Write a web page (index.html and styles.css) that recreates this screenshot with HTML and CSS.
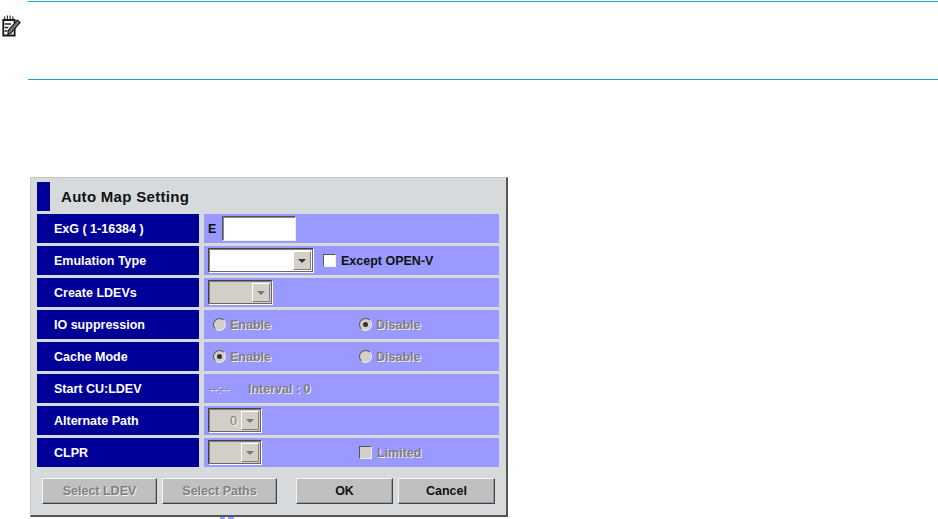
FILE: index.html
```html
<!DOCTYPE html>
<html lang="en">
<head>
<meta charset="utf-8">
<title>Auto Map Setting</title>
<link rel="stylesheet" href="styles.css">
</head>
<body>
<section class="note">
  <svg class="note-icon" width="20" height="22" viewBox="0 0 22 22" preserveAspectRatio="none" aria-hidden="true">
    <path d="M2.500 5H15V20.500H2.500Z" fill="#fff" stroke="#1a1a1a" stroke-width="2"/>
    <path d="M4 1.500V5M7 .5V5M10 .5V5M13 1.500V5" stroke="#222" stroke-width="1.200" fill="none"/>
    <path d="M4 9H11M4 12.500H8M4 16H7" stroke="#222" stroke-width="1.500" fill="none"/>
    <path d="M8 15.500L18 5L21 7.500L11 18L7.500 19.500Z" fill="#777" stroke="#1a1a1a" stroke-width="1.200"/>
  </svg>
</section>
<main class="panel">
  <header class="panel-title"><span class="title-mark"></span><h1>Auto Map Setting</h1></header>
  <div class="rows">
    <div class="label">ExG ( 1-16384 )</div>
    <div class="value"><span class="dark prefix">E</span><span class="field"></span></div>

    <div class="label">Emulation Type</div>
    <div class="value">
      <span class="select select-white select-wide"><span class="arrow"><i></i></span></span>
      <span class="check except"></span><span class="dark">Except OPEN-V</span>
    </div>

    <div class="label">Create LDEVs</div>
    <div class="value"><span class="select select-mid"><span class="arrow"><i></i></span></span></div>

    <div class="label">IO suppression</div>
    <div class="value radios">
      <span class="option"><span class="radio"></span><span class="off">Enable</span></span>
      <span class="option"><span class="radio on"></span><span class="off">Disable</span></span>
    </div>

    <div class="label">Cache Mode</div>
    <div class="value radios">
      <span class="option"><span class="radio on"></span><span class="off">Enable</span></span>
      <span class="option"><span class="radio"></span><span class="off">Disable</span></span>
    </div>

    <div class="label">Start CU:LDEV</div>
    <div class="value"><span class="off cu">--:--</span><span class="off">Interval : 0</span></div>

    <div class="label">Alternate Path</div>
    <div class="value"><span class="select select-small"><span class="sel-text off">0</span><span class="arrow"><i></i></span></span></div>

    <div class="label">CLPR</div>
    <div class="value">
      <span class="select select-small"><span class="arrow"><i></i></span></span>
      <span class="check limited"></span><span class="off">Limited</span>
    </div>
  </div>
  <footer class="buttons">
    <span class="btn btn-off">Select LDEV</span>
    <span class="btn btn-off">Select Paths</span>
    <span class="btn btn-ok">OK</span>
    <span class="btn">Cancel</span>
  </footer>
  <span class="scrap"></span>
</main>
</body>
</html>
```
FILE: styles.css
```css
html, body { margin: 0; padding: 0; background: #fff; }
body { width: 938px; height: 519px; overflow: hidden; font-family: "Liberation Sans", Arial, sans-serif; }

.note {
  box-sizing: border-box;
  height: 79px;
  margin: 1px 0 0 28px;
  border-top: 1px solid #1f9fd0;
  border-bottom: 1px solid #1f9fd0;
  position: relative;
}
.note-icon { position: absolute; left: -27px; top: 13px; }

.panel {
  box-sizing: border-box;
  position: relative;
  width: 478px;
  height: 340px;
  margin: 97px 0 0 30px;
  padding: 4px 7px 0 6px;
  background: #d6dadd;
  border-top: 1px solid #c4c6c4;
  border-left: 1px solid #c8c8c4;
  border-right: 2px solid #555;
  border-bottom: 2px solid #555;
}
.panel-title { display: flex; height: 29px; align-items: center; margin-bottom: 3px; }
.title-mark { width: 13px; height: 29px; background: #000099; margin-right: 11px; }
.panel-title h1 { margin: 0; font-size: 15px; font-weight: 700; color: #111; letter-spacing: .3px; }

.rows { display: grid; grid-template-columns: 162px 295px; column-gap: 5px; row-gap: 3px; grid-auto-rows: 29px; }
.label {
  background: #000099;
  color: #fff;
  font-size: 12.500px;
  font-weight: 700;
  line-height: 30px;
  padding-left: 17px;
}
.value {
  background: #9999ff;
  display: flex;
  align-items: center;
  padding-left: 4px;
  font-size: 12.500px;
  font-weight: 700;
}
.dark { color: #111; }
.off { color: #808080; text-shadow: 1px 1px 0 #eee; }
.prefix { width: 14px; }
.field {
  box-sizing: border-box;
  width: 74px;
  height: 25px;
  background: #fff;
  border: 1px solid;
  border-color: #555 #eee #eee #555;
  box-shadow: inset 1px 1px 0 #888;
}
.select {
  box-sizing: border-box;
  height: 25px;
  display: flex;
  justify-content: flex-end;
  align-items: center;
  background: #d4d0c8;
  border: 1px solid;
  border-color: #444 #fff #fff #444;
  box-shadow: inset 1px 1px 0 #808080, inset -1px -1px 0 #666;
  padding: 2px;
}
.select-white { background: #fff; }
.select-wide { width: 106px; }
.select-mid { width: 65px; }
.select-small { width: 54px; }
.sel-text { margin-right: 4px; font-weight: 400; }
.arrow {
  box-sizing: border-box;
  width: 18px;
  height: 19px;
  background: #d4d0c8;
  border: 1px solid;
  border-color: #fff #808080 #808080 #fff;
  display: flex;
  align-items: center;
  justify-content: center;
}
.arrow i {
  width: 0;
  height: 0;
  border-left: 4px solid transparent;
  border-right: 4px solid transparent;
  border-top: 4px solid #777;
}
.select-white .arrow i { border-top-color: #333; }
.check {
  box-sizing: border-box;
  width: 13px;
  height: 13px;
  border: 1px solid;
  border-color: #555 #eee #eee #555;
  margin-right: 5px;
}
.except { background: #fff; margin-left: 9px; }
.limited { background: #d4d0c8; margin-left: 97px; }
.radios { padding-left: 9px; }
.option { flex: none; width: 146px; display: flex; align-items: center; }
.radio {
  box-sizing: border-box;
  width: 13px;
  height: 13px;
  border-radius: 50%;
  background: #d4d0c8;
  border: 1px solid;
  border-color: #555 #eee #eee #555;
  margin-right: 4px;
  display: flex;
  align-items: center;
  justify-content: center;
}
.radio.on::after { content: ""; width: 5px; height: 5px; border-radius: 50%; background: #333; }
.cu { width: 40px; padding-left: 1px; box-sizing: border-box; font-weight: 400; }

.buttons { display: flex; padding: 11px 0 0 5px; }
.btn {
  box-sizing: border-box;
  flex: none;
  width: 97px;
  height: 26px;
  background: #c0c0c0;
  border: 1px solid;
  border-color: #f4f4f4 #444 #444 #f4f4f4;
  box-shadow: inset -1px -1px 0 #999;
  color: #111;
  font-size: 12.500px;
  font-weight: 700;
  line-height: 24px;
  text-align: center;
  margin-right: 5px;
}
.btn-off { width: 115px; color: #808080; text-shadow: 1px 1px 0 #eee; }
.btn-ok { margin-left: 14px; }

.scrap {
  position: absolute;
  left: 189px;
  top: 339px;
  width: 14px;
  height: 2px;
  background: linear-gradient(90deg, #9999ff 0 5px, #fff 5px 8px, #9999ff 8px);
}
```
